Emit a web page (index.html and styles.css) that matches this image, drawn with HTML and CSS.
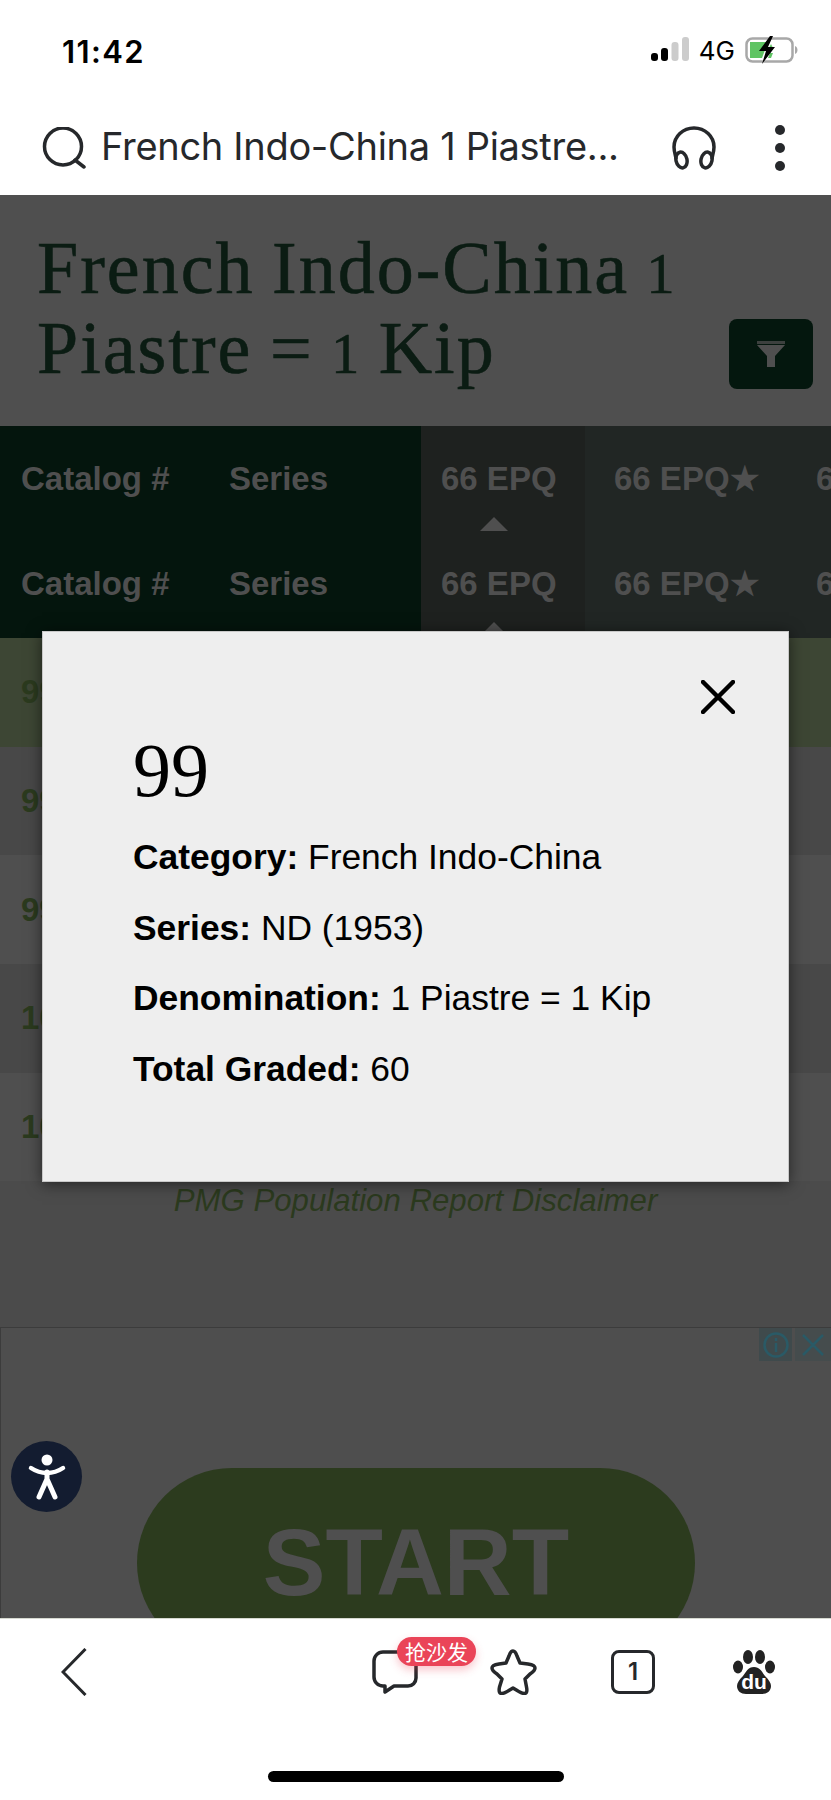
FILE: index.html
```html
<!DOCTYPE html>
<html lang="en">
<head>
<meta charset="utf-8">
<title>French Indo-China 1 Piastre = 1 Kip</title>
<link rel="stylesheet" href="styles.css">
</head>
<body>
<div class="phone">
  <header class="status">
    <span class="time">11:42</span>
    <div class="status-right">
      <svg class="signal" width="38" height="26" viewBox="0 0 38 26">
        <rect x="0" y="16" width="7" height="8" rx="3" fill="#000"/>
        <rect x="10" y="11" width="7" height="13" rx="3" fill="#000"/>
        <rect x="20.500" y="5" width="7" height="19" rx="3" fill="#ccc"/>
        <rect x="31" y="0" width="7" height="24" rx="3" fill="#ccc"/>
      </svg>
      <span class="net">4G</span>
      <svg class="battery" width="54" height="28" viewBox="0 0 54 28">
        <rect x="1.500" y="2.500" width="46" height="23" rx="6" fill="none" stroke="#a8a8a8" stroke-width="2.500"/>
        <path d="M50 10c2 1 2.500 2.500 2.500 4s-.5 3-2.500 4z" fill="#a8a8a8"/>
        <path d="M5 6h18l-6 16H5z" fill="#5fc463"/>
        <path d="M26 8l2 4h-4zM25 17h3l-2 5h-3z" fill="#5fc463"/>
        <path d="M25 0L14 15h7l-4 13 13-17h-7l5-11z" fill="#000"/>
      </svg>
    </div>
  </header>
  <div class="search">
    <svg class="search-icon" width="44" height="42" viewBox="0 0 44 42"><circle cx="21" cy="19.500" r="18.500" fill="none" stroke="#26282b" stroke-width="3.500"/><path d="M33 33l9 7" stroke="#26282b" stroke-width="3.500" stroke-linecap="round"/></svg>
    <span class="search-text">French Indo-China 1 Piastre...</span>
    <svg class="phones" width="44" height="44" viewBox="0 0 44 44" fill="none" stroke="#26282b" stroke-width="3.500"><path d="M4 32C3 28 2 25 2 21a20 19 0 0 1 40 0c0 4-1 7-2 11" stroke-linecap="round"/><ellipse cx="9.500" cy="34" rx="5.500" ry="8" transform="rotate(-12 9.500 34)"/><ellipse cx="34.500" cy="34" rx="5.500" ry="8" transform="rotate(12 34.500 34)"/></svg>
    <div class="kebab"><i></i><i></i><i></i></div>
  </div>

  <main class="page">
    <section class="title-row">
      <h1>French Indo-China <span class="old">1</span><br>Piastre = <span class="old">1</span> Kip</h1>
      <button class="filter" type="button" aria-label="Filter">
        <svg width="30" height="26" viewBox="0 0 30 26"><rect x="1" y="0" width="28" height="3" fill="#4f4f4f" opacity=".75"/><path d="M1 4h28L19 15v11h-8V15z" fill="#4f4f4f"/></svg>
      </button>
    </section>

    <div class="thead">
      <div class="th fixed">Catalog #</div>
      <div class="th fixed">Series</div>
      <div class="th grade-a">66 EPQ<i class="tri"></i></div>
      <div class="th grade-b">66 EPQ★</div>
      <div class="th grade-b">66 EPQ</div>
      <div class="th fixed">Catalog #</div>
      <div class="th fixed">Series</div>
      <div class="th grade-a">66 EPQ<i class="tri"></i></div>
      <div class="th grade-b">66 EPQ★</div>
      <div class="th grade-b">66 EPQ</div>
    </div>
    <div class="rows">
      <div class="row hit">99</div>
      <div class="row odd">99</div>
      <div class="row">99</div>
      <div class="row odd">100</div>
      <div class="row">100</div>
    </div>
    <p class="disclaimer">PMG Population Report Disclaimer</p>

    <aside class="ad">
      <div class="ad-tools">
        <span class="ad-tool"><svg width="26" height="26" viewBox="0 0 26 26" fill="none" stroke="#2a5a66" stroke-width="2.500"><circle cx="13" cy="13" r="11.500"/><path d="M13 11v9M13 6v3"/></svg></span>
        <span class="ad-tool"><svg width="24" height="24" viewBox="0 0 24 24" stroke="#2a5a66" stroke-width="2.500"><path d="M2 2l20 20M22 2L2 22"/></svg></span>
      </div>
      <div class="start"><span>START</span></div>
    </aside>

    <button class="a11y" type="button" aria-label="Accessibility">
      <svg width="40" height="46" viewBox="0 0 40 46" fill="none" stroke="#fff" stroke-linecap="round"><circle cx="20" cy="6" r="5.500" fill="#fff" stroke="none"/><path d="M4 14c6 4 10 5 16 5s10-1 16-5" stroke-width="4.500"/><path d="M20 18v9M20 25L12 43M20 25l8 18" stroke-width="5"/></svg>
    </button>

    <div class="modal">
      <svg class="close" width="34" height="34" viewBox="0 0 34 34" stroke="#000" stroke-width="4.500" stroke-linecap="round"><path d="M2 2l30 30M32 2L2 32"/></svg>
      <h2>99</h2>
      <p><b>Category:</b> French Indo-China</p>
      <p><b>Series:</b> ND (1953)</p>
      <p><b>Denomination:</b> 1 Piastre = 1 Kip</p>
      <p><b>Total Graded:</b> 60</p>
    </div>
  </main>

  <footer class="toolbar">
    <div class="tools">
      <svg class="back" width="26" height="48" viewBox="0 0 26 48" fill="none" stroke="#26282b" stroke-width="3"><path d="M24.500 1L2 24l22.500 23"/></svg>
      <div class="comment">
        <svg width="46" height="44" viewBox="0 0 46 44" fill="none" stroke="#26282b" stroke-width="3.500" stroke-linejoin="round"><path d="M11 2h24a9 9 0 0 1 9 9v17a8 8 0 0 1-8 8H22l-9 6v-6h-2a9 9 0 0 1-9-9V11a9 9 0 0 1 9-9z"/></svg>
        <span class="badge">抢沙发</span>
      </div>
      <svg class="star" width="48" height="46" viewBox="0 0 48 46" fill="none" stroke="#26282b" stroke-width="3.500" stroke-linejoin="round"><path d="M24 2c2 0 3 2 4 5l3 7 8 1c5 .7 7 2 7 4 0 2-2 4-5 6l-5 5 1.500 8c.8 4 .5 6-1.500 6.500-2 .5-4-1-7-2.500l-5-3-5 3c-3 1.500-5 3-7 2.500-2-.5-2.300-2.500-1.500-6.500L13 30l-5-5c-3-2-5-4-5-6 0-2 2-3.300 7-4l7-1 3-7c1-3 2-5 4-5z"/></svg>
      <div class="tab-count">1</div>
      <div class="paw">
        <svg width="42" height="44" viewBox="0 0 42 44"><ellipse cx="15" cy="7" rx="5" ry="7" fill="#222"/><ellipse cx="27" cy="7" rx="5" ry="7" fill="#222"/><ellipse cx="5" cy="17" rx="5" ry="6.500" fill="#222"/><ellipse cx="37" cy="17" rx="5" ry="6.500" fill="#222"/><path d="M21 17c6 0 8 5 11 9 4 4 6 7 6 10 0 5-4 8-9 8H13c-5 0-9-3-9-8 0-3 2-6 6-10 3-4 5-9 11-9z" fill="#222"/></svg>
        <span class="du">du</span>
      </div>
    </div>
    <div class="home-bar"></div>
  </footer>
</div>
</body>
</html>
```

FILE: styles.css
```css
* { box-sizing: border-box; }
html, body { margin: 0; padding: 0; background: #fff; }
body { font-family: "Liberation Sans", Arial, sans-serif; }
.phone { width: 831px; height: 1800px; overflow: hidden; display: flex; flex-direction: column; }

.status { height: 100px; display: flex; align-items: center; justify-content: space-between; padding: 0 32px 0 62px; flex: none; }
.time { font-family: Inter, sans-serif; font-weight: 600; font-size: 31px; color: #000; letter-spacing: 1.400px; position: relative; top: 1px; }
.status-right { display: flex; align-items: center; }
.signal { margin-right: 10px; }
.net { font-family: Inter, sans-serif; font-size: 26px; color: #000; margin-right: 10px; }
.battery { display: block; }

.search { height: 95px; display: flex; align-items: center; padding: 0 46px 0 42px; flex: none; }
.search-icon { flex: none; margin-right: 15px; }
.search-text { font-family: Inter, "Liberation Sans", sans-serif; font-size: 38px; color: #26282b; white-space: nowrap; width: 571px; letter-spacing: -.3px; margin-bottom: 4px; }
.phones { flex: none; }
.kebab { display: flex; flex-direction: column; gap: 8px; margin-left: 59px; }
.kebab i { display: block; width: 10px; height: 10px; border-radius: 50%; background: #26282b; }

.page { position: relative; flex: 1; min-height: 0; overflow: hidden; background: #4b4b4b; display: flex; flex-direction: column; }
.title-row { height: 231px; flex: none; background: #4f4f4f; display: flex; justify-content: space-between; align-items: flex-end; padding: 0 18px 37px 37px; }
h1 { margin: 0 0 1px; font-family: "Liberation Serif", serif; font-weight: 400; font-size: 74px; line-height: 80px; color: #0b1c13; letter-spacing: 2px; word-spacing: -3px; -webkit-text-stroke: .6px #0b1c13; }
.old { font-size: 56px; line-height: 0; }
.filter { width: 84px; height: 70px; border: 0; border-radius: 8px; background: #04170e; display: flex; align-items: center; justify-content: center; padding: 0; }

.thead { display: grid; grid-template-columns: 208px 213px 164px 202px 200px; grid-template-rows: 105px 107px; flex: none; }
.th { font-weight: 700; font-size: 33px; line-height: 38px; color: #4f4f4f; padding-top: 34px; white-space: nowrap; display: flex; flex-direction: column; align-items: flex-start; }
.fixed { background: #04150d; padding-left: 21px; }
.grade-a { background: #1e211f; padding-left: 20px; }
.grade-b { background: #212624; padding-left: 29px; }
.tri { display: block; width: 0; height: 0; margin: 19px 0 0 36px; border-left: 17px solid transparent; border-right: 17px solid transparent; border-bottom: 17px solid #4f4f4f; }

.rows { flex: none; }
.row { height: 108.700px; display: flex; align-items: center; padding-left: 21px; font-weight: 700; font-size: 33px; color: #2b3a1e; background: #4f4f4f; }
.row.odd { background: #484848; }
.row.hit { background: #3d4634; }

.disclaimer { margin: 0; height: 146px; padding-top: 2px; text-align: center; font-style: italic; font-size: 31.200px; line-height: 36px; color: #2b3a1e; flex: none; }

.ad { flex: 1; position: relative; background: #4e4e4e; border-top: 1px solid #3c3c3c; border-left: 1px solid #3c3c3c; display: flex; justify-content: center; padding-top: 140px; }
.ad-tools { position: absolute; top: 0; right: 0; display: flex; gap: 3px; }
.ad-tool { height: 33px; width: 33px; display: flex; align-items: center; justify-content: center; background: #3f4a4c; }
.ad-tool + .ad-tool { width: 36px; background: #454c4d; }
.start { width: 558px; height: 190px; flex: none; border-radius: 95px; background: #2c3b1e; text-align: center; font-weight: 700; font-size: 94px; line-height: 190px; color: #4f4f4f; }

.a11y { position: absolute; left: 11px; top: 1246px; width: 71px; height: 71px; border: 0; border-radius: 50%; background: #131c30; padding: 0; display: flex; align-items: center; justify-content: center; }

.modal { position: absolute; left: 42px; top: 436px; width: 747px; height: 551px; background: #eee; border: 1px solid #c8c8c8; box-shadow: 0 2px 14px rgba(0,0,0,.55); padding: 101px 0 0 90px; color: #000; }
.close { position: absolute; right: 53px; top: 48px; }
.modal h2 { margin: 0 0 15px; font-family: "Liberation Serif", serif; font-weight: 400; font-size: 76px; line-height: 74px; }
.modal p { margin: 0; font-size: 35.400px; line-height: 70.700px; white-space: nowrap; }

.toolbar { height: 182px; flex: none; background: #fff; border-top: 1px solid #d6d9d0; display: flex; flex-direction: column; }
.tools { height: 152px; padding: 29px 57px 0 61px; display: flex; align-items: flex-start; }
.back { flex: none; margin-right: 285px; }
.comment { position: relative; width: 46px; height: 44px; flex: none; margin: 2px 71px 0 0; }
.comment svg { display: block; }
.badge { position: absolute; left: 25px; top: -13px; width: 79px; height: 29px; border-radius: 15px; background: #ea4458; color: #fff; font-family: "Noto Sans CJK SC", sans-serif; font-size: 21px; line-height: 29px; text-align: center; box-shadow: 0 4px 8px rgba(234,68,88,.3); }
.star { flex: none; margin-right: 74px; margin-top: 1px; }
.tab-count { width: 44px; height: 44px; flex: none; margin: 2px 78px 0 0; border: 3.500px solid #26282b; border-radius: 8px; font-family: Inter, sans-serif; font-weight: 600; font-size: 24px; line-height: 37px; text-align: center; color: #26282b; }
.paw { position: relative; width: 42px; height: 44px; flex: none; margin-top: 2px; }
.paw svg { display: block; }
.du { position: absolute; left: 0; right: 0; bottom: 1px; text-align: center; color: #fff; font-weight: 700; font-size: 21px; line-height: 22px; }
.home-bar { width: 296px; height: 11px; border-radius: 6px; background: #000; margin: 0 0 0 268px; }
```
